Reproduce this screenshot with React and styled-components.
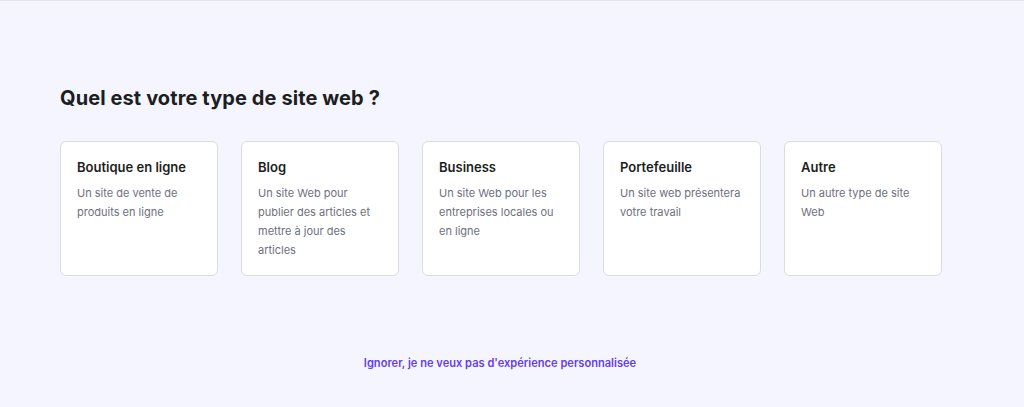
import React from "react";
import styled, { createGlobalStyle } from "styled-components";

const Global = createGlobalStyle`
  html, body { margin: 0; padding: 0; }
  body {
    background: #f4f5ff;
    font-family: "Inter", "Noto Sans", sans-serif;
    -webkit-font-smoothing: antialiased;
  }
`;

const Page = styled.div`
  box-sizing: border-box;
  height: 407px;
  border-top: 1px solid #e3e3ee;
  background: #f4f5ff;
  padding: 85px 84px 0 60px;
  display: flex;
  flex-direction: column;
`;

const Heading = styled.h1`
  margin: 0;
  font-size: 20px;
  font-weight: 700;
  color: #1d1e20;
  letter-spacing: 0.1px;
  line-height: 24px;
`;

const Grid = styled.div`
  margin-top: 31px;
  display: grid;
  grid-template-columns: repeat(5, 158px);
  gap: 23px;
`;

const Card = styled.div`
  box-sizing: border-box;
  height: 135px;
  background: #ffffff;
  border: 1px solid #dadce0;
  border-radius: 6px;
  padding: 16px 16px;
  display: flex;
  flex-direction: column;
  gap: 8px;
`;

const CardTitle = styled.div`
  font-size: 13px;
  font-weight: 600;
  color: #1d1e20;
  line-height: 18px;
`;

const CardText = styled.div`
  font-size: 11px;
  color: #6d7081;
  line-height: 19px;
`;

const Skip = styled.a`
  margin-top: auto;
  margin-bottom: 37px;
  align-self: center;
  font-size: 11.1px;
  font-weight: 600;
  color: #673de6;
  text-decoration: none;
  cursor: pointer;
`;

const items = [
  { title: "Boutique en ligne", text: "Un site de vente de produits en ligne" },
  { title: "Blog", text: "Un site Web pour publier des articles et mettre à jour des articles" },
  { title: "Business", text: "Un site Web pour les entreprises locales ou en ligne" },
  { title: "Portefeuille", text: "Un site web présentera votre travail" },
  { title: "Autre", text: "Un autre type de site Web" },
];

export default function App() {
  return (
    <>
      <Global />
      <Page>
        <Heading>Quel est votre type de site web ?</Heading>
        <Grid>
          {items.map((it) => (
            <Card key={it.title}>
              <CardTitle>{it.title}</CardTitle>
              <CardText>{it.text}</CardText>
            </Card>
          ))}
        </Grid>
        <Skip>Ignorer, je ne veux pas d'expérience personnalisée</Skip>
      </Page>
    </>
  );
}
